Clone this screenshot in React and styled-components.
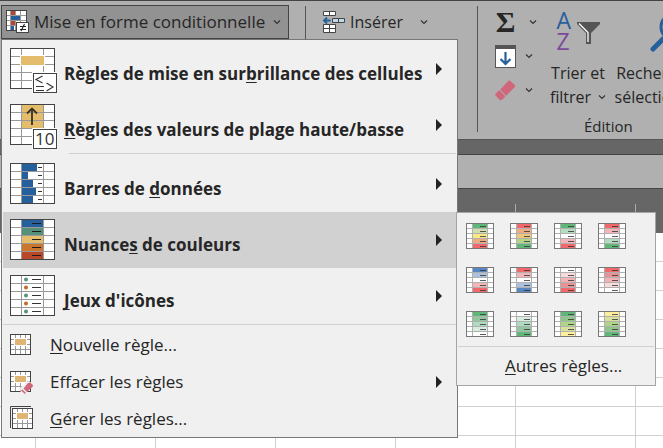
import React from "react";
import styled, { createGlobalStyle } from "styled-components";

const GlobalStyle = createGlobalStyle`
  *, *::before, *::after { box-sizing: border-box; }
  body {
    margin: 0;
    background: #fff;
    color: #262626;
    font: 16px/24px "Open Sans", "Noto Sans", sans-serif;
  }
  button { font: inherit; color: inherit; border: 0; padding: 0; background: none; text-align: left; white-space: nowrap; }
  svg { display: block; flex: none; overflow: visible; }
  u { text-decoration-thickness: 1px; text-underline-offset: 2px; text-decoration-skip-ink: none; }
`;

const Window = styled.main`
  position: relative;
  display: flex;
  flex-direction: column;
  min-height: 100vh;
  overflow: hidden;
`;

const Ribbon = styled.header`
  display: flex;
  align-items: flex-start;
  height: 140px;
  padding: 4px 0 0 1px;
  overflow: hidden;
  background: #b0b0b0;
  border-top: 1px solid #444;
  border-bottom: 1px solid #555;

  & > * { flex: none; }
`;

const MenuButton = styled.button`
  display: flex;
  align-items: center;
  width: 288px;
  height: 34px;
  padding: 0 10px 0 4px;
  gap: 4px;
  background: #929292;
  border: 1px solid #444;
  font-size: 17px;
`;

const Grow = styled.span`
  flex: 1;
`;

const Divider = styled.div`
  width: 1px;
  height: 126px;
  margin-top: 1px;
  margin-left: ${(p) => p.$gap}px;
  background: #555;
`;

const InsertButton = styled.button`
  display: flex;
  align-items: center;
  gap: 5px;
  width: 105px;
  height: 34px;
  margin-left: 17px;
`;

const EditGroup = styled.section`
  display: grid;
  grid-template-columns: 70px 66px 108px;
  grid-template-rows: 108px 24px;
`;

const ToolColumn = styled.div`
  display: flex;
  flex-direction: column;
  padding-left: 17px;
`;

const ToolButton = styled.button`
  display: flex;
  align-items: center;
  gap: ${(p) => p.$gap || 9}px;
  height: 34px;
`;

const Sigma = styled.span`
  width: 21px;
  font: bold 30px/32px "Liberation Serif", serif;
  text-align: center;
`;

const LargeButton = styled.button`
  display: flex;
  flex-direction: column;
  align-items: center;
  width: ${(p) => p.$width}px;
`;

const LargeIcon = styled.span`
  display: flex;
  justify-content: center;
  height: 56px;
`;

const Letters = styled.span`
  display: flex;
  flex-direction: column;
  padding-top: 5px;
  width: 20px;
  font-size: 23px;
  line-height: 21px;
  color: #7c4a9c;
`;

const BlueLetter = styled.span`
  color: #255f9c;
`;

const FunnelSlot = styled.span`
  padding-top: 17px;
`;

const LabelLine = styled.span`
  display: flex;
  align-items: center;
  gap: 7px;
`;

const GroupName = styled.h2`
  grid-column: 2 / 4;
  margin: 0 0 0 36px;
  font-size: 15px;
  font-weight: 400;
  line-height: 26px;
`;

const Band = styled.div`
  height: 15px;
  background: #666;
  border-bottom: 1px solid #444;
`;

const FormulaBar = styled.div`
  height: 34px;
  background: #b0b0b0;
  border-bottom: 1px solid #444;
`;

const ColumnHeader = styled.div`
  height: 44px;
  padding-top: 15px;
  background: #666;
`;

const ColumnTicks = styled.div`
  height: 29px;
  background: linear-gradient(to right, transparent 119px, #aaa 119px) 36px 0 / 120px 29px;
`;

const Sheet = styled.div`
  flex: 1;
  background:
    linear-gradient(to right, transparent 119px, #d0d0d0 119px) 36px 0 / 120px 29px,
    linear-gradient(to bottom, transparent 28px, #d0d0d0 28px) 0 0 / 120px 29px;
`;

const Menu = styled.div`
  position: absolute;
  top: 39px;
  left: 1px;
  width: 457px;
  padding: 1px 1px 0;
  background: #f0f0f0;
  border: 1px solid #777;
  font-size: 17px;
`;

const BigItem = styled.button`
  display: flex;
  width: 100%;
  height: 56px;
  padding: 7px 14px 0 7px;
  background: ${(p) => (p.$active ? "#d1d1d1" : "transparent")};
  font-weight: 700;
`;

const BigLabel = styled.span`
  flex: 1;
  padding: 14px 0 0 9px;
`;

const ArrowSlot = styled.span`
  padding-top: 15px;
`;

const SmallItem = styled.button`
  display: flex;
  align-items: center;
  width: 100%;
  height: 37px;
  padding: 0 14px 0 7px;
  gap: 17px;
`;

const Rule = styled.hr`
  height: 1px;
  border: 0;
  background: #d0d0d0;
  margin: ${(p) => p.$margin || "0"};
`;

const Submenu = styled.div`
  position: absolute;
  top: 212px;
  left: 456px;
  width: 200px;
  background: #f0f0f0;
  border: 1px solid #a5a5a5;
  font-size: 17px;
`;

const Swatches = styled.div`
  display: grid;
  grid-template-columns: repeat(4, 28px);
  gap: 18px 16px;
  padding: 10px 9px 9px;
`;

const MoreButton = styled.button`
  display: block;
  width: 100%;
  height: 38px;
  padding-left: 48px;
`;

const Chevron = () => (
  <svg width="8" height="6" viewBox="0 0 8 6" aria-hidden="true">
    <path d="M1 1.5 4 4.5 7 1.5" fill="none" stroke="#333" strokeWidth="1.2" />
  </svg>
);

const Arrow = () => (
  <svg width="6" height="12" aria-hidden="true"><path d="M0 0 6 6 0 12Z" fill="#222" /></svg>
);

const FormatIcon = () => (
  <svg width="24" height="24" aria-hidden="true">
    <rect x=".5" y=".5" width="20" height="20" fill="#fff" stroke="#444" />
    <path d="M1 5.5h19M1 10.5h19M1 15.5h19M4.5 1v19M9.5 1v19M14.5 1v19" stroke="#999" />
    <path d="M5 1h4v4H5zM5 11h4v4H5z" fill="#b5472f" />
    <path d="M5 6h9v4H5zM5 16h3v4H5z" fill="#255f9c" />
    <rect x="10.5" y="12.5" width="12" height="10" fill="#fff" stroke="#444" />
    <path d="M14 16.5h6M14 19.5h6M18.5 14l-3.5 7" stroke="#222" strokeWidth="1.1" />
  </svg>
);

const InsertIcon = () => (
  <svg width="22" height="22" aria-hidden="true">
    <path d="M.5.5h12v4H.5zM6.5.5v4M.5 13.5h12v8H.5zM6.5 13.5v8M.5 17.5h12" fill="#fff" stroke="#444" />
    <path d="M9.5 7.5h12v4h-12zM15.5 7.5v4" fill="#c4d8ec" stroke="#444" />
    <path d="M7.5 9.5H1M4 6.5l-3 3 3 3" fill="none" stroke="#255f9c" strokeWidth="1.8" />
  </svg>
);

const FillIcon = () => (
  <svg width="21" height="23" aria-hidden="true">
    <rect x=".5" y=".5" width="20" height="22" fill="#fff" stroke="#555" />
    <path d="M0 0h21v4H0z" fill="#555" />
    <path d="M10.5 7v12M5.5 14l5 5 5-5" fill="none" stroke="#255f9c" strokeWidth="2.2" />
  </svg>
);

const EraserIcon = () => (
  <svg width="21" height="21" viewBox="0 0 21 21" aria-hidden="true">
    <path d="M13 1.5 14.5.5 20 5.5 19.5 7 11 15.5 5.5 9.5ZM4.5 10.5 10 16.5 7 19.5 5 20 .5 15 1 13.5Z" fill="#d0667a" stroke="#d0667a" strokeWidth=".6" strokeLinejoin="round" />
  </svg>
);

const FunnelIcon = () => (
  <svg width="23" height="22" aria-hidden="true">
    <path d="M0 0h23v2l-9 9v11H9V11L0 2Z" fill="#555" />
    <path d="M2 1.5 11 10.5V20" fill="none" stroke="#fff" strokeWidth="1.3" />
  </svg>
);

const SearchIcon = () => (
  <svg width="38" height="42" aria-hidden="true">
    <circle cx="25" cy="22" r="13" fill="none" stroke="#255f9c" strokeWidth="3" />
    <path d="M14 34 4 44" stroke="#255f9c" strokeWidth="5" strokeLinecap="round" />
  </svg>
);

const TableFrame = ({ children, over }) => (
  <svg width="45" height="41" aria-hidden="true">
    <rect width="45" height="41" fill="#fff" />
    {children}
    <path d="M1 8.5h43M1 16.5h43M1 24.5h43M1 32.5h43M11.5 1v39M33.5 1v39" stroke="#999" />
    <rect x=".5" y=".5" width="44" height="40" fill="none" stroke="#444" />
    {over}
  </svg>
);

const HighlightIcon = () => (
  <TableFrame
    over={
      <>
        <path d="M10 7h25v11H10z" fill="#fff" />
        <path d="M11 8h23v9H11z" fill="#e4bd6c" />
        <path d="M22 24h25v21H22z" fill="#fff" />
        <rect x="23.5" y="25.5" width="23" height="19" fill="#fff" stroke="#444" />
        <path d="M32.5 28 26 31.5l6.5 3.500M26 38.5h8M26 42.5h8M36.5 35l6.5 4-6.5 4" fill="none" stroke="#333" strokeWidth="1.1" />
      </>
    }
  />
);

const BadgeText = styled.text`
  font-size: 17px;
  font-weight: 400;
  fill: #333;
`;

const TopBottomIcon = () => (
  <TableFrame
    over={
      <>
        <path d="M22 24h25v21H22z" fill="#fff" />
        <rect x="23.5" y="25.5" width="23" height="19" fill="#fff" stroke="#444" />
        <BadgeText x="25" y="41">10</BadgeText>
        <path d="M22 21V5M17 9.5 22 4.5l5 5" fill="none" stroke="#3b3222" strokeWidth="1.8" />
      </>
    }
  >
    <path d="M12 1h21v23H12z" fill="#e4bd6c" />
  </TableFrame>
);

const rowTops = [1, 9, 17, 25, 33];

const BarsIcon = () => (
  <TableFrame>
    {[15, 6, 11, 14, 11].map((w, i) => (
      <React.Fragment key={i}>
        <rect x="12" y={rowTops[i]} width={w} height="7" fill="#255f9c" />
        <path d={`M28 ${rowTops[i] + 3.5}h4`} stroke="#333" />
      </React.Fragment>
    ))}
  </TableFrame>
);

const ScaleIcon = () => (
  <TableFrame>
    {["#255f9c", "#55907b", "#e4bd6c", "#cb752d", "#bb472b"].map((c, i) => (
      <React.Fragment key={c}>
        <rect x="12" y={rowTops[i]} width="21" height="7" fill={c} />
        <path d={`M22 ${rowTops[i] + 3.5}h9`} stroke="#1d1d1d" />
      </React.Fragment>
    ))}
  </TableFrame>
);

const SetsIcon = () => (
  <TableFrame>
    {["#55907b", "#c4662a", "#55907b", "#c4662a", "#55907b"].map((c, i) => (
      <React.Fragment key={i}>
        <circle cx="16" cy={rowTops[i] + 3.5} r="2" fill={c} />
        <path d={`M22 ${rowTops[i] + 3.5}h9`} stroke="#333" />
      </React.Fragment>
    ))}
  </TableFrame>
);

const RuleIcon = ({ kind }) => (
  <svg width="23" height="21" aria-hidden="true">
    {kind === "manage" && <path d="M.5 20V-1.5H21" fill="none" stroke="#444" />}
    <g transform={kind === "manage" ? "translate(2 0)" : undefined}>
      <rect x=".5" y=".5" width="20" height="20" fill="#fff" stroke="#444" />
      <path d="M1 5.5h3M17 5.5h3M1 10.5h3M17 10.5h3M1 15.5h19M5.5 1v3M10.5 1v3M15.5 1v3M5.5 12v8M10.5 12v8M15.5 12v8" stroke="#999" />
      <path d="M5 5h11v6H5z" fill="#e0b574" />
    </g>
    {kind === "clear" && (
      <>
        <path d="M10 17 18 10 24 13 15 23H11Z" fill="#f0f0f0" />
        <path d="m18 12 2-.5 3 2.5-.5 2-5.500 5-3.500-3.500ZM12.500 18.500l3.500 3.500-1 1-4-3.500Z" fill="#d0667a" />
      </>
    )}
  </svg>
);

const scales = [
  ["#5fb878", "#cfe0ae", "#fbe983", "#efab82", "#f3696b"],
  ["#f3696b", "#efab82", "#ecc77c", "#b4d488", "#5fb878"],
  ["#5fb878", "#b4dcc2", "#ffffff", "#f3b5b8", "#f3696b"],
  ["#f3696b", "#f3b5b8", "#ffffff", "#b4dcc2", "#5fb878"],
  ["#5788c4", "#abc1e0", "#ffffff", "#f3b5b8", "#f3696b"],
  ["#f3696b", "#f3b5b8", "#ffffff", "#abc1e0", "#5788c4"],
  ["#ffffff", "#f6dadc", "#f5b2b5", "#e99294", "#f3696b"],
  ["#f3696b", "#e99294", "#f5b2b5", "#f6dadc", "#ffffff"],
  ["#5fb878", "#90c79e", "#aedcbf", "#d9ece0", "#ffffff"],
  ["#ffffff", "#d9ece0", "#aedcbf", "#90c79e", "#5fb878"],
  ["#5fb878", "#8fc587", "#aed684", "#d7e19b", "#fdef9c"],
  ["#fdef9c", "#d7e19b", "#aed684", "#8fc587", "#5fb878"],
];

const Swatch = ({ colors }) => (
  <svg width="28" height="26" aria-hidden="true">
    <rect width="28" height="26" fill="#fff" />
    <path d="M1 5.5h26M1 10.5h26M1 15.5h26M1 20.5h26M6.5 1v24M21.5 1v24" stroke="#b0b0b0" />
    {colors.map((c, i) => (
      <React.Fragment key={i}>
        <rect x="7" y={1 + i * 5} width="14" height="4" fill={c} />
        <path d={`M14 ${3.5 + i * 5}h6`} stroke="#333" strokeOpacity=".8" />
      </React.Fragment>
    ))}
    <rect x=".5" y=".5" width="27" height="25" fill="none" stroke="#777" />
  </svg>
);

const BigEntry = ({ icon, active, children }) => (
  <BigItem role="menuitem" aria-haspopup="menu" $active={active}>
    {icon}
    <BigLabel>{children}</BigLabel>
    <ArrowSlot><Arrow /></ArrowSlot>
  </BigItem>
);

export default function App() {
  return (
    <Window>
      <GlobalStyle />
      <Ribbon>
        <MenuButton aria-expanded="true">
          <FormatIcon />
          <span>Mise en forme conditionnelle</span>
          <Grow />
          <Chevron />
        </MenuButton>
        <Divider $gap={16} />
        <InsertButton>
          <InsertIcon />
          <span>Insérer</span>
          <Grow />
          <Chevron />
        </InsertButton>
        <Divider $gap={49} />
        <EditGroup>
          <ToolColumn>
            <ToolButton $gap={13} aria-label="Somme"><Sigma>Σ</Sigma><Chevron /></ToolButton>
            <ToolButton aria-label="Remplissage"><FillIcon /><Chevron /></ToolButton>
            <ToolButton aria-label="Effacer"><EraserIcon /><Chevron /></ToolButton>
          </ToolColumn>
          <LargeButton $width={60}>
            <LargeIcon>
              <Letters aria-hidden="true"><BlueLetter>A</BlueLetter><span>Z</span></Letters>
              <FunnelSlot><FunnelIcon /></FunnelSlot>
            </LargeIcon>
            <LabelLine>Trier et</LabelLine>
            <LabelLine>filtrer <Chevron /></LabelLine>
          </LargeButton>
          <LargeButton $width={108}>
            <LargeIcon><SearchIcon /></LargeIcon>
            <LabelLine>Rechercher et</LabelLine>
            <LabelLine>sélectionner <Chevron /></LabelLine>
          </LargeButton>
          <GroupName>Édition</GroupName>
        </EditGroup>
      </Ribbon>
      <Band />
      <FormulaBar />
      <ColumnHeader><ColumnTicks /></ColumnHeader>
      <Sheet />

      <Menu role="menu">
        <BigEntry icon={<HighlightIcon />}>Règles de mise en sur<u>b</u>rillance des cellules</BigEntry>
        <BigEntry icon={<TopBottomIcon />}><u>R</u>ègles des valeurs de plage haute/basse</BigEntry>
        <Rule $margin="0 0 2px 66px" />
        <BigEntry icon={<BarsIcon />}>Barres de <u>d</u>onnées</BigEntry>
        <BigEntry icon={<ScaleIcon />} active>Nuance<u>s</u> de couleurs</BigEntry>
        <BigEntry icon={<SetsIcon />}><u>J</u>eux d'icônes</BigEntry>
        <Rule $margin="0 0 1px" />
        <SmallItem role="menuitem"><RuleIcon /><span><u>N</u>ouvelle règle...</span></SmallItem>
        <SmallItem role="menuitem" aria-haspopup="menu">
          <RuleIcon kind="clear" /><span>Effa<u>c</u>er les règles</span><Grow /><Arrow />
        </SmallItem>
        <SmallItem role="menuitem"><RuleIcon kind="manage" /><span><u>G</u>érer les règles...</span></SmallItem>
      </Menu>

      <Submenu role="menu">
        <Swatches>
          {scales.map((colors, i) => (
            <button key={i} role="menuitem" aria-label={`Nuance ${i + 1}`}><Swatch colors={colors} /></button>
          ))}
        </Swatches>
        <Rule $margin="0 1px" />
        <MoreButton role="menuitem"><u>A</u>utres règles...</MoreButton>
      </Submenu>
    </Window>
  );
}
